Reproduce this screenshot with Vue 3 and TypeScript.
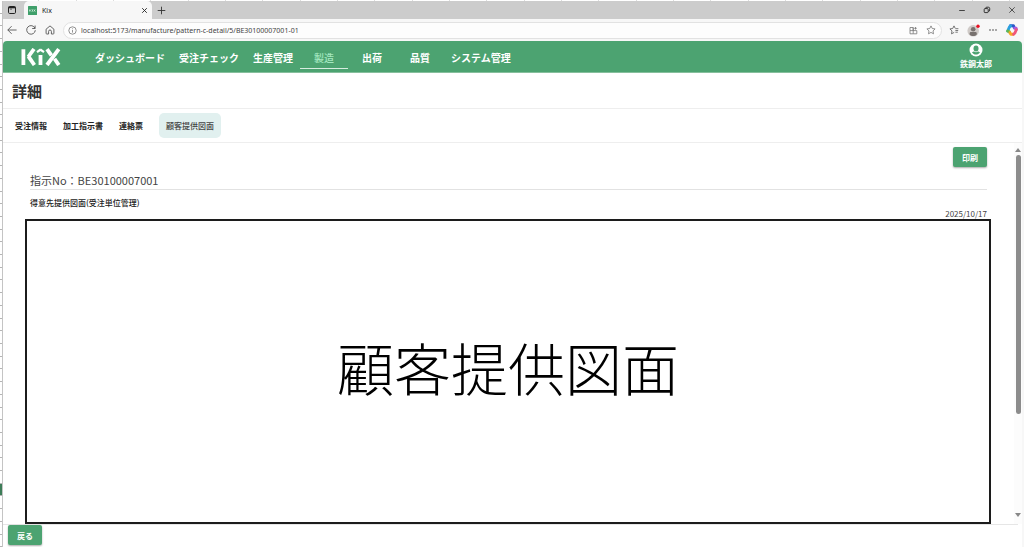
<script setup lang="ts">
import { ref } from 'vue'

interface Item {
  id: string
  label: string
}

const menu: Item[] = [
  { id: 'dashboard', label: 'ダッシュボード' },
  { id: 'order', label: '受注チェック' },
  { id: 'production', label: '生産管理' },
  { id: 'manufacture', label: '製造' },
  { id: 'shipping', label: '出荷' },
  { id: 'quality', label: '品質' },
  { id: 'system', label: 'システム管理' },
]
const tabs: Item[] = [
  { id: 'info', label: '受注情報' },
  { id: 'instruction', label: '加工指示書' },
  { id: 'contact', label: '連絡票' },
  { id: 'drawing', label: '顧客提供図面' },
]
const activeMenu = ref('manufacture')
const activeTab = ref('drawing')
const url = ref('localhost:5173/manufacture/pattern-c-detail/5/BE30100007001-01')
</script>

<template>
  <div class="desktop">
    <div class="sheet-cols"><i v-for="n in 27" :key="n"></i></div>
    <div class="below">
      <div class="sheet-rows"><i v-for="n in 43" :key="n" :class="{ picked: n === 39 }"></i></div>
      <div class="window">
        <div class="tabstrip">
          <button class="plain workspace" aria-label="ワークスペース">
            <svg width="10" height="10" viewBox="0 0 10 10" fill="none" stroke="#222"><rect x="1.5" y="1.5" width="7" height="7" rx="1.2" /><path d="M1.5 2.5h7" stroke-width="1.6" /><path d="M4 3.5v1.5" stroke-width=".8" /></svg>
          </button>
          <div class="browser-tab">
            <svg class="favicon" width="9" height="9" viewBox="0 0 9 9"><rect width="9" height="9" rx=".5" fill="#3f9f6a" /><path d="M1.7 3.5v2M3.2 3.5l-1 1 1 1M4.5 3.5v2M5.8 3.5l1.4 2M7.2 3.5l-1.4 2" stroke="#d9f0e2" stroke-width=".8" fill="none" /></svg>
            <span class="tab-name">Kix</span>
            <button class="plain" aria-label="タブを閉じる">
              <svg width="7" height="7" viewBox="0 0 7 7" stroke="#222" stroke-width=".9"><path d="M1.2 1.2l4.6 4.6M5.8 1.2L1.2 5.8" /></svg>
            </button>
          </div>
          <button class="plain add" aria-label="新しいタブ">
            <svg width="9" height="9" viewBox="0 0 9 9" stroke="#333" stroke-width=".9"><path d="M4.5.7v7.6M.7 4.5h7.6" /></svg>
          </button>
          <div class="controls">
            <button class="plain" aria-label="最小化"><svg width="8" height="8" viewBox="0 0 8 8" stroke="#333" stroke-width=".9"><path d="M1.2 4.5h5.6" /></svg></button>
            <button class="plain" aria-label="元に戻す"><svg width="8" height="8" viewBox="0 0 8 8" fill="none" stroke="#222" stroke-width=".9"><rect x="1.2" y="2.6" width="4" height="4" rx=".8" /><path d="M2.6 2.4c0-.8.4-1.2 1.2-1.2h1.6c.8 0 1.3.5 1.3 1.3v1.6c0 .8-.5 1.3-1.3 1.3" /></svg></button>
            <button class="plain" aria-label="閉じる"><svg width="8" height="8" viewBox="0 0 8 8" stroke="#333" stroke-width=".8"><path d="M1.3 1.3l5.4 5.4M6.7 1.3L1.3 6.7" /></svg></button>
          </div>
        </div>

        <div class="toolbar">
          <button class="plain" aria-label="戻る"><svg width="12" height="12" viewBox="0 0 12 12" fill="none" stroke="#555" stroke-width=".9"><path d="M10.6 6H1.8M5.6 2.2L1.8 6l3.8 3.8" /></svg></button>
          <button class="plain" aria-label="更新"><svg width="12" height="12" viewBox="0 0 12 12" fill="none" stroke="#555" stroke-width=".9"><path d="M10 4.3A4.3 4.3 0 1 0 10.3 6.2M10.1 1.5v3H7.2" /></svg></button>
          <button class="plain" aria-label="ホーム"><svg width="12" height="12" viewBox="0 0 12 12" fill="none" stroke="#555" stroke-width=".9"><path d="M2.1 5.2L6 1.9l3.9 3.3v4.1c0 .4-.3.7-.7.7H7.4V7.4a1.4 1.4 0 0 0-2.8 0V10H2.8c-.4 0-.7-.3-.7-.7z" /></svg></button>
          <div class="address">
            <svg width="9" height="9" viewBox="0 0 9 9" fill="none" stroke="#666" stroke-width=".7"><circle cx="4.5" cy="4.5" r="3.7" /><path d="M4.5 4v2.6M4.5 2.4v.8" /></svg>
            <input v-model="url" aria-label="アドレス" />
            <button class="plain" aria-label="アプリ"><svg width="9" height="9" viewBox="0 0 9 9" fill="none" stroke="#777" stroke-width=".8"><path d="M1 1.5h3.2v6.3H1zM1 4.6h6.8v3.2H4.2M4.2 4.6V1.5M6.5 1v2.6M5.2 2.3h2.6" /></svg></button>
            <button class="plain" aria-label="お気に入りに追加"><svg width="10" height="10" viewBox="0 0 10 10" fill="none" stroke="#777" stroke-width=".8" stroke-linejoin="round"><path d="M5 .9l1.25 2.6 2.85.4L7 5.9l.5 2.9L5 7.4 2.5 8.8 3 5.9.9 3.9l2.85-.4z" /></svg></button>
          </div>
          <div class="tools">
            <button class="plain" aria-label="お気に入り"><svg width="10" height="10" viewBox="0 0 10 10" fill="none" stroke="#555" stroke-width=".8" stroke-linejoin="round"><path d="M6.2 3.3L5 .9 3.7 3.5.9 3.9 3 5.9l-.5 2.9L5.2 7.4M6.4 3.7h3M6.4 5.5h2.8M6.4 7.2h2.4" /></svg></button>
            <button class="plain" aria-label="プロフィール"><svg width="13" height="13" viewBox="0 0 13 13"><circle cx="6.2" cy="6.8" r="5.8" fill="#cfcac7" /><circle cx="6.2" cy="5.2" r="2.3" fill="#77716e" /><path d="M2.6 10.5V9.3c0-1 .8-1.4 1.8-1.4H8c1 0 1.8.4 1.8 1.4v1.2c-1.9 2-5.3 2-7.2 0z" fill="#77716e" /><circle cx="11" cy="2.2" r="1.7" fill="#e81123" /></svg></button>
            <button class="plain" aria-label="メニュー"><svg width="10" height="10" viewBox="0 0 10 10" fill="#444"><circle cx="2" cy="5" r=".8" /><circle cx="5" cy="5" r=".8" /><circle cx="8" cy="5" r=".8" /></svg></button>
            <button class="plain" aria-label="Copilot">
              <svg width="12" height="12" viewBox="0 0 12 12" fill="none" stroke-linecap="round" stroke-linejoin="round" stroke-width="2.9"><path d="M4.5 1.8h3l.8 2" stroke="#2858c8" /><path d="M4.5 1.8L3.3 3.2 1.7 7" stroke="#2a9fe0" /><path d="M1.7 7l1.7.9" stroke="#62b84c" /><path d="M3.9 8.6l.8 1.6h2.6" stroke="#f5a623" /><path d="M8.6 4.2h1.5l.3 1.2" stroke="#a85be0" /><path d="M10.3 5.7L8.9 9l-1.3 1.2" stroke="#f0567a" /></svg>
            </button>
          </div>
        </div>

        <div class="app">
          <header class="app-header">
            <svg class="logo" width="40" height="18" viewBox="0 0 40 18" role="img" aria-label="KiX" stroke="#fff" stroke-width="3.8">
              <line x1="2.4" y1="1.2" x2="2.4" y2="17" />
              <line x1="13" y1="1" x2="7.2" y2="9" />
              <line x1="7.4" y1="8.3" x2="13.4" y2="17" />
              <line x1="19.5" y1="7" x2="19.5" y2="17" />
              <line x1="16" y1="4.2" x2="19.7" y2="1.5" stroke-width="2.2" />
              <line x1="23" y1="4.2" x2="19.3" y2="1.5" stroke-width="2.2" />
              <line x1="26" y1="1.2" x2="30.4" y2="7.3" />
              <line x1="37.8" y1="1.2" x2="26" y2="17" />
              <line x1="33.5" y1="10.7" x2="37.8" y2="17" />
            </svg>
            <nav>
              <a v-for="m in menu" :key="m.id" href="#" :class="{ active: m.id === activeMenu }" @click.prevent="activeMenu = m.id">{{ m.label }}</a>
            </nav>
            <button class="plain user">
              <svg width="14" height="14" viewBox="0 0 14 14"><circle cx="7" cy="7" r="6.5" fill="#fff" /><ellipse cx="7" cy="5.6" rx="2.5" ry="3" fill="#4ca371" /><path d="M3 9.3c.8-.7 1.5-.8 2.2-.8.9.9 2.7.9 3.6 0 .7 0 1.4.1 2.2.8-.9 1.5-2.3 2.3-4 2.3s-3.1-.8-4-2.3z" fill="#4ca371" /></svg>
              <span>鉄鋼太郎</span>
            </button>
          </header>
          <h1>詳細</h1>
          <div class="tabs" role="tablist">
            <button v-for="t in tabs" :key="t.id" class="plain" role="tab" :aria-selected="t.id === activeTab" :class="{ selected: t.id === activeTab }" @click="activeTab = t.id">{{ t.label }}</button>
          </div>
          <div class="body">
            <main>
              <div class="actions"><button class="primary">印刷</button></div>
              <h2>指示No：BE30100007001</h2>
              <h3>得意先提供図面(受注単位管理)</h3>
              <time>2025/10/17</time>
              <div class="drawing">顧客提供図面</div>
            </main>
            <div class="scroll">
              <span class="arrow up"></span>
              <div class="track"><div class="thumb"></div></div>
              <span class="arrow down"></span>
            </div>
          </div>
          <footer><button class="primary">戻る</button></footer>
        </div>
      </div>
    </div>
  </div>
</template>

<style>
body {
  margin: 0;
}
</style>

<style scoped>
* {
  box-sizing: border-box;
}
.desktop {
  height: 100vh;
  display: flex;
  flex-direction: column;
  overflow: hidden;
  background: #fff;
  color: #222;
  font-family: "Noto Sans CJK JP", sans-serif;
}
svg {
  display: block;
  flex: none;
}
.plain {
  border: 0;
  background: none;
  padding: 0;
  font-family: inherit;
  color: inherit;
  cursor: pointer;
}
.sheet-cols {
  display: flex;
  height: 1px;
  padding: 0 14px 0 2px;
}
.sheet-cols i {
  flex: 1;
  border-right: 1px solid #ddd;
}
.below {
  flex: 1;
  display: flex;
  min-height: 0;
}
.sheet-rows {
  width: 2px;
  display: flex;
  flex-direction: column;
}
.sheet-rows i {
  flex: 1;
  border-bottom: 1px solid #b5b5b5;
}
.sheet-rows .picked {
  background: #3d7d58;
}
.window {
  flex: 1;
  min-width: 0;
  display: flex;
  flex-direction: column;
  background: #f7f7f7;
  border-left: 1px solid #c4c4c4;
}
.tabstrip {
  height: 18px;
  display: flex;
  align-items: center;
  background: #ccc;
}
.workspace {
  margin-left: 4px;
}
.browser-tab {
  align-self: stretch;
  width: 128px;
  margin-left: 7px;
  padding: 0 4px;
  display: flex;
  align-items: center;
  background: #f7f7f7;
  border-radius: 5px 5px 0 0;
}
.tab-name {
  flex: 1;
  margin-left: 5px;
  font: 7px "Noto Sans", sans-serif;
}
.add {
  margin-left: 5px;
}
.controls {
  margin-left: auto;
  display: flex;
  gap: 17px;
  padding-right: 8px;
}
.toolbar {
  height: 22px;
  display: flex;
  align-items: center;
  gap: 7px;
  padding: 0 6px 0 3px;
}
.address {
  flex: 1;
  height: 17px;
  display: flex;
  align-items: center;
  gap: 4px;
  padding: 0 5px 0 4px;
  background: #fdfdfd;
  border: 1px solid #e2e2e2;
  border-radius: 9px;
}
.address button + button {
  margin-left: 4px;
}
.address input {
  flex: 1;
  min-width: 0;
  border: 0;
  padding: 0;
  outline: 0;
  background: none;
  color: #444;
  font: 7px "Noto Sans", sans-serif;
}
.tools {
  display: flex;
  align-items: center;
  gap: 8px;
}
.app {
  flex: 1;
  min-height: 0;
  display: flex;
  flex-direction: column;
  margin-right: 2px;
  background: #fff;
  border-radius: 4px 4px 0 0;
  overflow: hidden;
}
.app-header {
  height: 32px;
  flex: none;
  display: flex;
  align-items: stretch;
  background: #4ca371;
  border-bottom: 1px solid #86bf9d;
  color: #fff;
}
.logo {
  align-self: center;
  margin-left: 18px;
}
nav {
  display: flex;
  margin-left: 27px;
}
nav a {
  min-width: 48px;
  padding: 1px 7px 0;
  margin-bottom: 3px;
  border-bottom: 1px solid transparent;
  text-align: center;
  text-decoration: none;
  color: #fff;
  font-size: 10px;
  font-weight: 700;
  line-height: 31px;
}
nav a.active {
  color: #a5e8c0;
  font-weight: 500;
  border-color: #d6ecdf;
}
.user {
  margin-left: auto;
  margin-right: 30px;
  display: flex;
  flex-direction: column;
  align-items: center;
  padding-top: 2px;
  font-size: 8px;
  font-weight: 700;
  line-height: 14px;
}
h1 {
  margin: 0;
  height: 36px;
  flex: none;
  padding-left: 9px;
  border-bottom: 1px solid #eee;
  font-size: 15px;
  line-height: 35px;
  font-weight: 700;
  color: #333;
}
.tabs {
  height: 34px;
  flex: none;
  display: flex;
  align-items: center;
  gap: 16px;
  padding-left: 12px;
  border-bottom: 1px solid #eee;
}
.tabs button {
  font-size: 8px;
  font-weight: 700;
  line-height: 12px;
}
.tabs .selected {
  height: 25px;
  padding: 0 7px;
  border-radius: 5px;
  background: #e1f0ef;
  color: #444;
  font-weight: 500;
}
.body {
  flex: 1;
  min-height: 0;
  display: flex;
}
main {
  flex: 1;
  min-width: 0;
  display: flex;
  flex-direction: column;
  padding: 4px 27px 0;
}
.actions {
  display: flex;
  justify-content: flex-end;
}
.primary {
  width: 34px;
  height: 20px;
  padding: 0;
  border: 0;
  border-radius: 2px;
  background: #4ca371;
  color: #fff;
  box-shadow: 0 1px 2px #0005;
  font: 700 8px "Noto Sans CJK JP", sans-serif;
}
h2 {
  margin: 4px 0 0;
  border-bottom: 1px solid #e2e2e2;
  font-size: 11px;
  line-height: 18px;
  font-weight: 400;
  color: #444;
}
h3 {
  margin: 7px 0 0;
  font-size: 8px;
  line-height: 12px;
  font-weight: 500;
  color: #222;
}
time {
  align-self: stretch;
  text-align: right;
  font-size: 8px;
  line-height: 10px;
  color: #444;
}
.drawing {
  flex: 1;
  margin: 0 -4px 0 -5px;
  padding-bottom: 12px;
  border: 2px solid #1c1c1c;
  display: flex;
  align-items: center;
  justify-content: center;
  font-size: 57px;
  line-height: 60px;
  font-weight: 300;
  color: #000;
}
.scroll {
  width: 8px;
  display: flex;
  flex-direction: column;
  align-items: center;
  padding: 5px 0 7px;
  background: #fcfcfc;
}
.arrow {
  border: 3px solid transparent;
}
.up {
  border-top: 0;
  border-bottom: 4px solid #888;
}
.down {
  border-bottom: 0;
  border-top: 4px solid #888;
}
.track {
  flex: 1;
  width: 5px;
  padding: 3px 0;
}
.thumb {
  height: 73%;
  border-radius: 3px;
  background: #8c8c8c;
}
footer {
  height: 23px;
  flex: none;
  margin-right: 4px;
  padding-left: 5px;
  border-top: 1px solid #e6e6e6;
}
footer .primary {
  display: block;
}
</style>
